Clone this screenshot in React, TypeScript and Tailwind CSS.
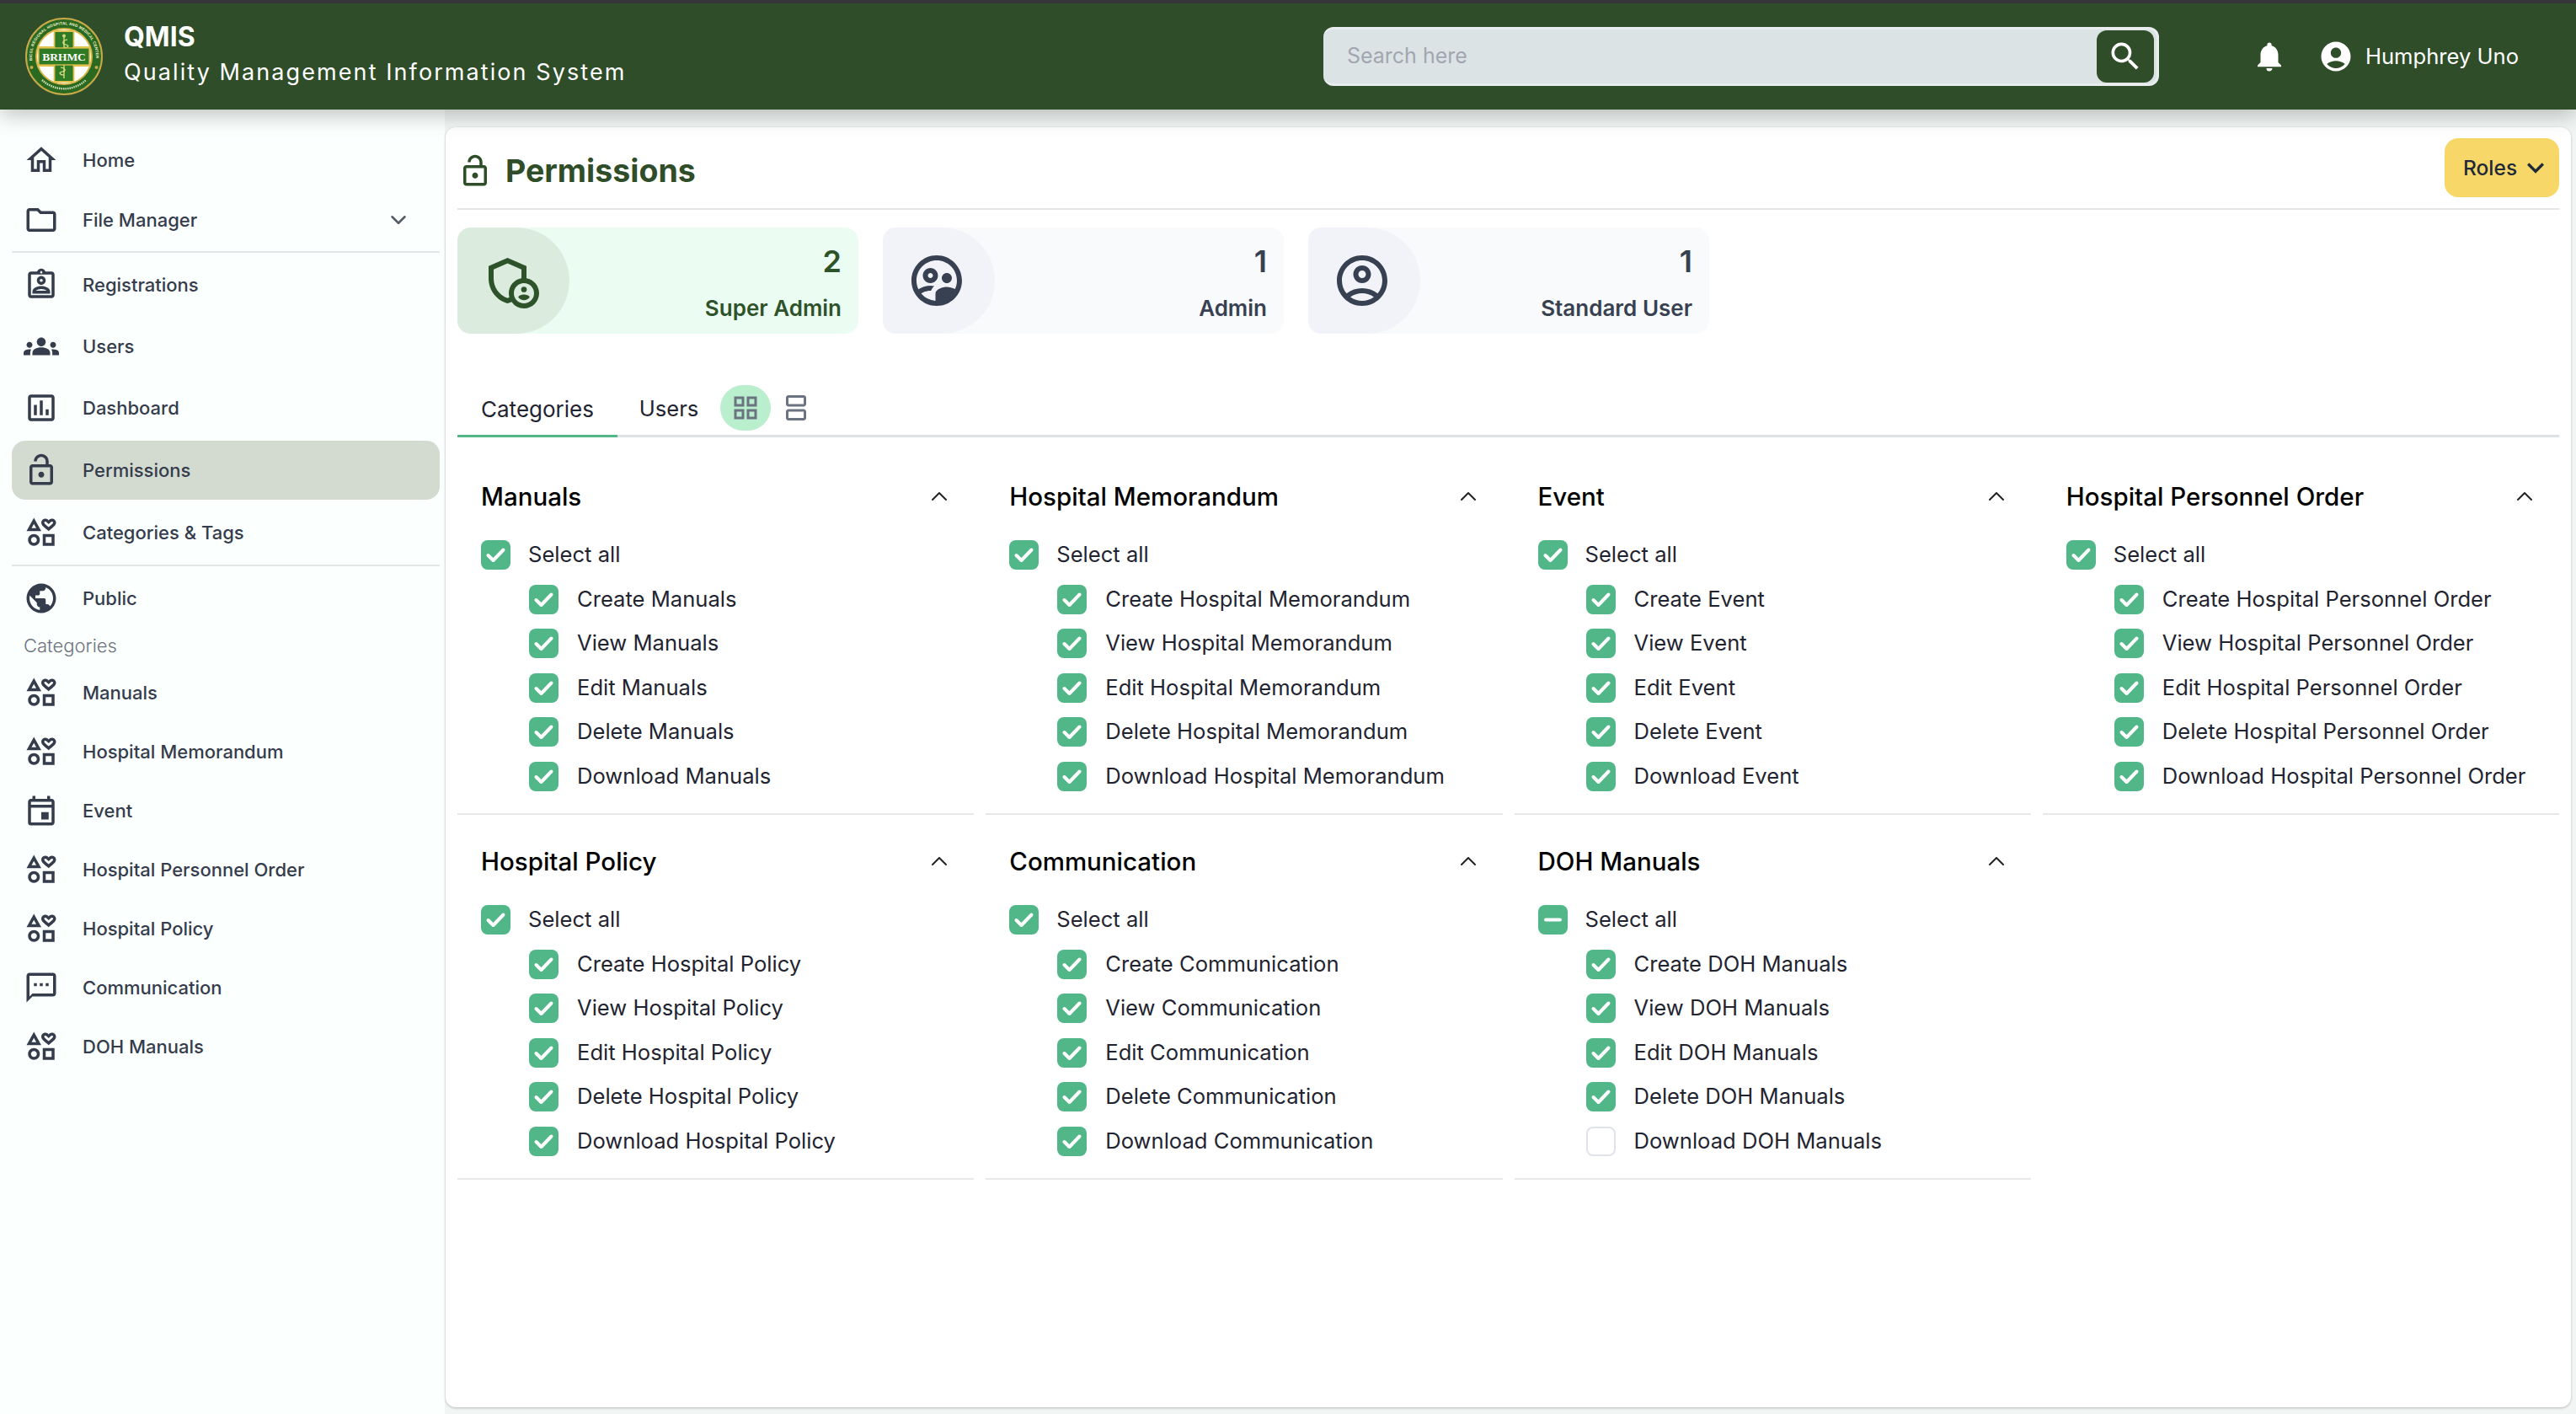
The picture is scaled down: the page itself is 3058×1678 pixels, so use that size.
import {
  MdOutlineHome, MdOutlineFolder, MdOutlineAssignmentInd, MdGroups, MdOutlineAssessment, MdOutlineLockOpen,
  MdOutlineInterests, MdPublic, MdOutlineEvent, MdOutlineTextsms, MdOutlineAdminPanelSettings,
  MdOutlineSupervisedUserCircle, MdOutlineAccountCircle, MdSearch, MdNotifications, MdAccountCircle,
  MdOutlineGridView, MdOutlineSplitscreen, MdKeyboardArrowDown,
} from 'react-icons/md'
import { ChevronDown, ChevronUp } from 'lucide-react'

const font = { fontFamily: 'Inter, "Noto Sans", sans-serif' }

function Logo() {
  return (
    <svg viewBox="0 0 92 94" className="w-[92px] h-[94px] shrink-0">
      <defs>
        <path id="ring" d="M8.3 52a38 38 0 1 1 75.4 0" />
      </defs>
      <circle cx="46" cy="47" r="45" fill="#2a6a20" stroke="#c9a94a" strokeWidth="2" />
      <text fontSize="4.6" fill="#f4f0d0" fontFamily="Liberation Sans, sans-serif" fontWeight="700">
        <textPath href="#ring" textLength="126" lengthAdjust="spacing">BICOL REGIONAL HOSPITAL AND MEDICAL CENTER</textPath>
      </text>
      <path d="M20 75a38 38 0 0 0 52 0" fill="none" stroke="#cfe0b8" strokeWidth="2.5" strokeDasharray="1.5 1" />
      <circle cx="7.5" cy="60" r="2" fill="#c9a94a" />
      <circle cx="84.5" cy="60" r="2" fill="#c9a94a" />
      <circle cx="46" cy="47" r="33" fill="#ffffff" stroke="#d6b44a" strokeWidth="2" />
      <path d="M34.5 17h23v19h18.5v22H57.5v19h-23V58H16V36h18.5z" fill="#2f7a24" stroke="#e2c14f" strokeWidth="1.8" />
      <path d="M46 21v52" stroke="#cfd67a" strokeWidth="1.5" />
      <path d="M50 27c-6 1-7 5-2 6s3 4-2 3M42 60c6 1 7 4 2 5s-3 4 2 4" fill="none" stroke="#e2e28a" strokeWidth="1.2" />
      <circle cx="46" cy="22.5" r="2" fill="#cfd67a" />
      <rect x="16" y="37" width="60" height="20" fill="#2f7a24" stroke="#e2c14f" strokeWidth="1.3" />
      <text x="46" y="52" textAnchor="middle" fontSize="13.5" fontWeight="700" fill="#ffffff" fontFamily="Liberation Serif, serif">BRHMC</text>
    </svg>
  )
}

function NavItem({ icon: Icon, label, active, chevron, className }: any) {
  return (
    <div className={`flex items-center h-[70px] rounded-2xl pl-[14px] pr-[34px] ${active ? 'bg-[#d3dbd1]' : ''} ${className || ''}`}>
      <Icon className="w-[42px] h-[42px] text-[#353c4c] shrink-0" />
      <span className="ml-[28px] text-[22px] font-medium text-[#353c4c] whitespace-nowrap">{label}</span>
      {chevron && <ChevronDown strokeWidth={2} className="ml-auto w-[30px] h-[30px] text-[#555b66]" />}
    </div>
  )
}

function Sidebar() {
  return (
    <aside className="w-[528px] shrink-0 bg-[#fbfffe] pl-[14px] pr-[6px] pt-[25px]">
      <NavItem icon={MdOutlineHome} label="Home" />
      <NavItem icon={MdOutlineFolder} label="File Manager" chevron className="mt-px" />
      <div className="h-[2px] bg-[#e3e6e6] mt-[2px]" />
      <NavItem icon={MdOutlineAssignmentInd} label="Registrations" className="mt-[3px]" />
      <NavItem icon={MdGroups} label="Users" className="mt-[3px]" />
      <NavItem icon={MdOutlineAssessment} label="Dashboard" className="mt-[3px]" />
      <NavItem icon={MdOutlineLockOpen} label="Permissions" active className="mt-[4px]" />
      <NavItem icon={MdOutlineInterests} label="Categories & Tags" className="mt-[4px]" />
      <div className="h-[2px] bg-[#e3e6e6] mt-[3px]" />
      <NavItem icon={MdPublic} label="Public" className="mt-[3px]" />
      <div className="pl-[14px] mt-[6px] h-[30px] flex items-center text-[22px] font-light text-[#6b7280]">Categories</div>
      <NavItem icon={MdOutlineInterests} label="Manuals" className="mt-[6px]" />
      <NavItem icon={MdOutlineInterests} label="Hospital Memorandum" />
      <NavItem icon={MdOutlineEvent} label="Event" />
      <NavItem icon={MdOutlineInterests} label="Hospital Personnel Order" />
      <NavItem icon={MdOutlineInterests} label="Hospital Policy" />
      <NavItem icon={MdOutlineTextsms} label="Communication" />
      <NavItem icon={MdOutlineInterests} label="DOH Manuals" />
    </aside>
  )
}

function StatCard({ icon: Icon, count, label, green }: any) {
  return (
    <div className={`w-[476px] h-[126px] rounded-2xl flex ${green ? 'bg-[#ebfdf2]' : 'bg-[#f9fafc]'}`}>
      <div className={`w-[133px] h-full pr-[5px] rounded-l-2xl rounded-r-[66px] flex items-center justify-center ${green ? 'bg-[#dbecdf]' : 'bg-[#f1f3f9]'}`}>
        <Icon className={`w-[72px] h-[72px] ${green ? 'text-[#2e5229]' : 'text-[#374151]'}`} />
      </div>
      <div className={`flex-1 flex flex-col items-end justify-between pr-[20px] pt-[20px] pb-[14px] ${green ? 'text-[#2e5229]' : 'text-[#374151]'}`}>
        <span className="text-[36px] leading-[40px] font-semibold">{count}</span>
        <span className="text-[26px] leading-[32px] font-semibold">{label}</span>
      </div>
    </div>
  )
}

function Checkbox({ state }: { state: 'on' | 'off' | 'mixed' }) {
  if (state === 'off') return <span className="w-[35px] h-[35px] rounded-lg border-2 border-[#e0e3ea] bg-white shrink-0" />
  return (
    <span className="w-[35px] h-[35px] rounded-lg bg-[#52b788] shrink-0">
      <svg viewBox="0 0 35 35" className="w-[35px] h-[35px]" fill="none" stroke="#fff" strokeWidth="4" strokeLinecap="round" strokeLinejoin="round">
        {state === 'on' ? <polyline points="8.5,18 14.5,24 26.5,11.5" /> : <line x1="9" y1="17.5" x2="26" y2="17.5" />}
      </svg>
    </span>
  )
}

function PermissionGroup({ name, last }: { name: string; last?: boolean }) {
  const rows = ['Create', 'View', 'Edit', 'Delete', 'Download']
  return (
    <div className="border-b-2 border-[#e6e8ea] h-[433px] pt-[2px] pl-[28px] pr-[25px]">
      <div className="flex items-center justify-between h-[46px] mt-[30px]">
        <span className="text-[29.5px] font-medium text-black whitespace-nowrap">{name}</span>
        <ChevronUp strokeWidth={1.5} className="w-[32px] h-[32px] text-[#222]" />
      </div>
      <div className="flex items-center h-[44px] mt-[24px]">
        <Checkbox state={last ? 'mixed' : 'on'} />
        <span className="ml-[21px] text-[25.6px] text-[#1f2430]">Select all</span>
      </div>
      <div className="pl-[57px] mt-[9px] flex flex-col gap-[8.5px]">
        {rows.map((r) => (
          <div key={r} className="flex items-center h-[44px]">
            <Checkbox state={last && r === 'Download' ? 'off' : 'on'} />
            <span className="ml-[22px] text-[25.6px] text-[#1f2430] whitespace-nowrap">{r} {name}</span>
          </div>
        ))}
      </div>
    </div>
  )
}

export default function App() {
  return (
    <div className="h-[1678px] flex flex-col bg-[#f1f5f4] overflow-hidden" style={font}>
      <header className="relative z-10 h-[130px] shrink-0 bg-[#2e4d28] border-t-4 border-[#36363a] shadow-[0_6px_24px_rgba(0,0,0,0.25)] flex items-center pl-[30px] pr-[68px]">
        <Logo />
        <div className="ml-[25px] text-white -mt-[6px]">
          <div className="text-[32px] leading-[38px] font-bold">QMIS</div>
          <div className="text-[27px] leading-[36px] tracking-[2.08px] mt-[5px] whitespace-nowrap">Quality Management Information System</div>
        </div>
        <div className="ml-auto w-[992px] h-[70px] bg-[#dce3e5] rounded-xl flex items-center pl-[28px] pr-[3px] border-r-[3px] border-y-[3px] border-[#e9eded]">
          <span className="text-[25px] text-[#a2a6b0]">Search here</span>
          <div className="ml-auto w-[68px] h-[62px] rounded-xl bg-[#2e4d28] flex items-center justify-center">
            <MdSearch className="w-[44px] h-[44px] text-white" />
          </div>
        </div>
        <MdNotifications className="ml-[110px] w-[42px] h-[42px] text-white" />
        <MdAccountCircle className="ml-[37px] w-[42px] h-[42px] text-white" />
        <span className="ml-[14px] text-[25.6px] text-white whitespace-nowrap">Humphrey Uno</span>
      </header>
      <div className="flex-1 flex min-h-0">
        <Sidebar />
        <main className="flex-1 mt-[21px] mb-[8px] mr-[6px] ml-[1px] bg-white rounded-xl shadow-[0_1px_3px_rgba(0,0,0,0.25)] pl-[14px] pr-[14px]">
          <div className="h-[98px] flex items-center border-b-2 border-[#e3e5e8]">
            <MdOutlineLockOpen className="w-[42px] h-[42px] text-[#2e4d28] mt-[8px]" />
            <span className="ml-[15px] text-[37.5px] font-bold text-[#2e4d28] mt-[8px]">Permissions</span>
            <button className="ml-auto w-[136px] h-[70px] rounded-2xl bg-[#f7d767] text-[#1f2937] text-[24.5px] font-medium flex items-center pl-[22px] gap-[2px]">
              Roles <MdKeyboardArrowDown className="w-[40px] h-[40px]" />
            </button>
          </div>
          <div className="flex gap-[29px] mt-[21px]">
            <StatCard icon={MdOutlineAdminPanelSettings} count="2" label="Super Admin" green />
            <StatCard icon={MdOutlineSupervisedUserCircle} count="1" label="Admin" />
            <StatCard icon={MdOutlineAccountCircle} count="1" label="Standard User" />
          </div>
          <div className="flex items-end h-[62px] mt-[61px] border-b-[3px] border-[#dde2e6]">
            <div className="w-[190px] h-[62px] pb-[3px] flex items-center justify-center text-[26px] text-[#1f2430] border-b-[3px] border-[#52b788] -mb-[3px]">Categories</div>
            <div className="w-[122px] h-[62px] flex items-center justify-center text-[25.6px] text-[#1f2430]">Users</div>
            <div className="w-[60px] h-[54px] mb-[5px] rounded-full bg-[#b9efcc] flex items-center justify-center">
              <MdOutlineGridView className="w-[36px] h-[36px] text-[#6b7280]" />
            </div>
            <div className="w-[60px] h-[54px] mb-[5px] flex items-center justify-center">
              <MdOutlineSplitscreen className="w-[36px] h-[36px] text-[#6b7280]" />
            </div>
          </div>
          <div className="grid grid-cols-4 gap-x-[14px] mt-[15px]">
            {['Manuals', 'Hospital Memorandum', 'Event', 'Hospital Personnel Order', 'Hospital Policy', 'Communication'].map((n) => (
              <PermissionGroup key={n} name={n} />
            ))}
            <PermissionGroup name="DOH Manuals" last />
          </div>
        </main>
      </div>
    </div>
  )
}
